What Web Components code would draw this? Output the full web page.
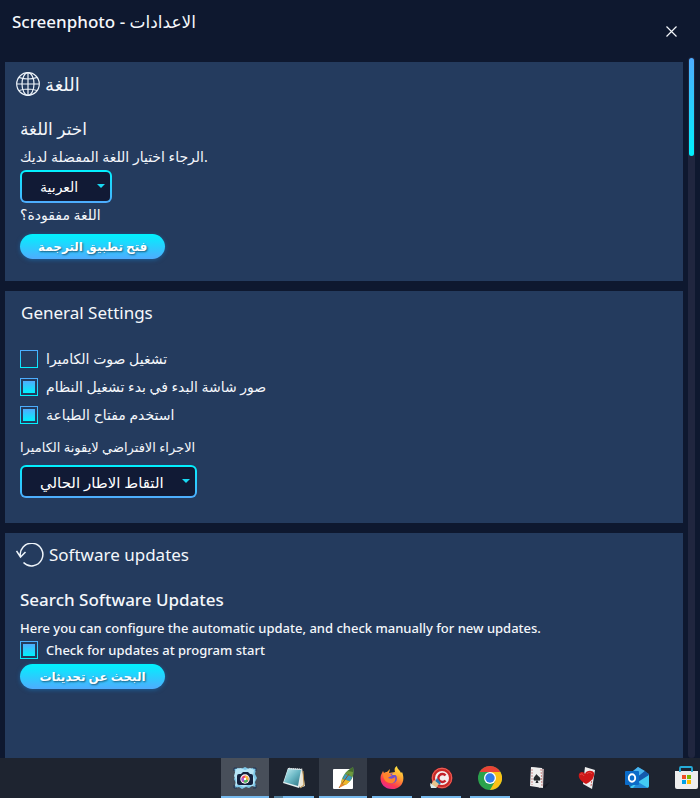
<!DOCTYPE html>
<html lang="en">
<head>
<meta charset="utf-8">
<title>Screenphoto</title>
<style>
html,body{height:100%}
body{margin:0;background:#0e182f;color:#f4f7fb;font-family:"Noto Sans","DejaVu Sans",sans-serif;font-size:14px;
--cyan:#00f2fe;--blue:#4facfe;--card:#243b5e;--ink:#111a35}
</style>
</head>
<body>
<settings-app></settings-app>
<script>
const define=(name,html,setup)=>{
  const t=document.createElement('template');
  t.innerHTML='<style>*{box-sizing:border-box}:host{display:block}</style>'+html;
  customElements.define(name,class extends HTMLElement{
    constructor(){
      super();
      this.attachShadow({mode:'open'}).append(t.content.cloneNode(true));
    }
    connectedCallback(){if(setup)setup(this,this.shadowRoot)}
  });
};

define('title-bar',`<style>
:host{display:flex;justify-content:space-between;align-items:flex-start;height:57px;padding:8px 16px 0 12px}
h1{margin:0;font-size:17px;font-weight:500;line-height:28px}
button{border:0;background:none;color:inherit;width:26px;height:26px;margin-top:10px;padding:0;display:grid;place-items:center}
svg{width:11px;height:11px}
</style>
<h1><slot></slot></h1>
<button aria-label="Close"><svg viewBox="0 0 11 11" fill="none" stroke="currentColor" stroke-width="1.2"><path d="M.5.5l10 10M10.5.5l-10 10"/></svg></button>`);

define('settings-card',`<style>
:host{background:var(--card);padding:8px 15px 22px}
header{display:flex;align-items:center;gap:5px;height:28px;margin-bottom:17px}
h2{margin:0;font-size:17px;font-weight:400;line-height:28px}
::slotted(svg){margin-left:-4px;flex:none}
::slotted(h3){margin:0 0 2px;font-size:17px;font-weight:500;line-height:28px}
::slotted(p){margin:0;line-height:24px}
</style>
<header><slot name="icon"></slot><h2><slot name="heading"></slot></h2></header>
<slot></slot>`);

define('drop-down',`<style>
:host{display:block;width:fit-content;position:relative}
select{appearance:none;display:block;height:33px;padding:0 31px 0 18px;border:2px solid transparent;border-radius:6px;
background:linear-gradient(var(--ink),var(--ink)) padding-box,linear-gradient(var(--cyan),var(--blue)) border-box;
color:#fff;font:inherit;direction:ltr}
i{position:absolute;right:7px;top:14px;border:4px solid transparent;border-top-color:#19d8f2;border-bottom:0;pointer-events:none}
</style><select><option></option></select><i></i>`,(h,r)=>{
  r.querySelector('option').textContent=h.getAttribute('value');
  r.querySelector('select').setAttribute('aria-label',h.getAttribute('label'));
});

define('check-box',`<style>
:host{height:28px}
:host([compact]){height:24px}
:host([compact]) label{height:20px}
label{display:flex;align-items:center;gap:8px;height:28px;line-height:24px;width:fit-content}
input{appearance:none;margin:0;width:18px;height:18px;flex:none;border:1px solid transparent;
background:linear-gradient(var(--card),var(--card)) padding-box,linear-gradient(var(--blue),var(--cyan)) border-box}
input:checked{background:linear-gradient(var(--blue),var(--cyan)) content-box,linear-gradient(var(--card),var(--card)) padding-box,linear-gradient(var(--blue),var(--cyan)) border-box;padding:2px}
</style><label><input type="checkbox"><span><slot></slot></span></label>`,(h,r)=>{
  r.querySelector('input').checked=h.hasAttribute('checked');
});

define('pill-button',`<style>
:host{width:fit-content}
button{display:block;border:0;border-radius:13px;min-width:145px;height:25px;padding:0 18px;font:inherit;font-size:12px;font-weight:700;line-height:24px;color:#fff;
background:linear-gradient(var(--cyan),var(--blue));box-shadow:0 1px 4px #1684d080;text-shadow:1px 1px 2px #0008}
</style><button><slot></slot></button>`);

define('scroll-track',`<style>
:host{width:7px;background:#20263f;border-radius:4px;padding:1px}
div{height:98px;border-radius:3px;background:linear-gradient(var(--blue),var(--cyan))}
</style><div></div>`);

define('task-item',`<style>
:host{flex:0 0 48px;height:40px;position:relative}
:host([active]){background:#484f5a}
:host([hover]){background:#343b47}
button{width:100%;height:100%;border:0;background:none;padding:0;display:grid;place-items:center}
:host([open])::after{content:"";position:absolute;bottom:0;left:4px;right:4px;height:2px;background:#76b9ed}
:host([grouped])::after{background:linear-gradient(90deg,#54819f 9px,#76b9ed 9px)}
:host([wide])::after{left:0;right:0}
</style><button><slot></slot></button>`,(h,r)=>r.querySelector('button').setAttribute('aria-label',h.getAttribute('label')));

define('task-bar',`<style>
:host{display:flex;gap:1px;height:40px;background:#1e2430;padding-left:221px;overflow:hidden}
</style>
<task-item label="Screenphoto" open wide active><svg width="24" height="24" viewBox="0 0 24 24"><path d="M1 3l4-1 3 1 4-2 4 2 4-1 3 1-1 5 2 4-2 4 1 5-4-1-3 2-3-1-4 2-3-2-4 1 1-5-2-4 2-4z" fill="#7cc6e8"/><path d="M3 3l5-1 4 2 5-2 4 2-1 5 2 5-2 6-5-1-4 2-5-2-4 1 1-6-2-4z" fill="#b5e4f5"/><path d="M1 5V2h3M20 2h3v3M23 19v3h-3M4 22H1v-3" fill="none" stroke="#213656" stroke-width="1"/><rect x="4" y="8" width="16" height="11" rx="2" fill="#14203c"/><path d="M8 8l2-2h5l2 2" fill="#14203c"/><circle cx="12" cy="13" r="4.700" fill="#fff"/><circle cx="12" cy="13" r="3.500" fill="#ed426b"/><path d="M12 13V9.500a3.500 3.500 0 0 1 3.200 5z" fill="#f6bd38"/><path d="M12 13l3.200 1.500a3.500 3.500 0 0 1-4.800 1.600z" fill="#45bd61"/><path d="M12 13l-1.600 3.100A3.500 3.500 0 0 1 8.800 11.500z" fill="#a45bd0"/><circle cx="12" cy="13" r="1.200" fill="#fff"/></svg></task-item>
<task-item label="Notepad" open grouped><svg width="24" height="24" viewBox="0 0 24 24"><defs><linearGradient id="n" x2="1" y2="1"><stop stop-color="#c4eef4"/><stop offset=".5" stop-color="#6ab7c4"/><stop offset="1" stop-color="#2d7383"/></linearGradient></defs><path d="M20 2l3 18-5 2-2-4z" fill="#ece6d6"/><path d="M21 5l1 14-4 3" fill="none" stroke="#b88b45"/><path d="M6 2l14 1-3 19-16-5z" fill="#e4eef0"/><path d="M6 3l13 1-3 16-14-4z" fill="url(#n)"/><path d="M7 2.500l13 1" stroke="#d5dde0" stroke-width="1.500" stroke-dasharray="1 1"/></svg></task-item>
<task-item label="Image editor" open wide hover><svg width="24" height="24" viewBox="0 0 24 24"><rect x="2" y="3" width="20" height="20" rx="1" fill="#fff"/><path d="M10 19c0-7 4-14 12-18 2 6 0 14-8 18z" fill="#5b8e48"/><path d="M11 13l8 2-4 4-5-1z" fill="#efb72b"/><path d="M14 8l7 3-2 4-7-2z" fill="#3c9ac1"/><path d="M14 8l5-4 3 2-1 4z" fill="#6f9a3e"/><path d="M17 5l5-4v5z" fill="#456d2d"/><path d="M8 22L18 8" stroke="#955724"/><path d="M8 22l2-5 4 2z" fill="#e4862d"/></svg></task-item>
<task-item label="Firefox" open><svg width="24" height="24" viewBox="0 0 24 24"><defs><linearGradient id="f" x1=".8" x2=".25" y2="1"><stop stop-color="#fff044"/><stop offset=".42" stop-color="#ff9831"/><stop offset=".75" stop-color="#ff3b4d"/><stop offset="1" stop-color="#e3269b"/></linearGradient></defs><path d="M3 5l1 2c1-1 2-1 3-1l3-3-1 4 6-1c-1-3 0-5 2-6 0 3 3 4 4 7l1-1c4 9-1 17-10 17C3 23-1 15 1 9z" fill="url(#f)"/><circle cx="12" cy="12.500" r="5" fill="#7150ce"/><path d="M3 8c4-2 7-1 9 2-2 0-3 1-4 2 3 1 5 1 7-1 1 5-2 7-5 6-4 0-7-4-7-9z" fill="#ff842c"/><path d="M12 9c1-3 5-3 6 1-1-1-2-1-3-1" fill="#ffb63a"/></svg></task-item>
<task-item label="CCleaner" open><svg width="24" height="24" viewBox="0 0 24 24"><circle cx="13" cy="12" r="10.500" fill="#c92825"/><circle cx="13" cy="12" r="9.700" fill="none" stroke="#e8655e"/><circle cx="13" cy="12" r="7" fill="#f5eeee"/><path d="M16.500 9.500a4 4 0 1 0 0 5" fill="none" stroke="#c3202a" stroke-width="2.400"/><path d="M8 12l4 5-2 2-4-3z" fill="#247bb5"/><path d="M5 14l5 4-3 4-6-2z" fill="#e7c58f"/><path d="M1 17l7 5H2z" fill="#d9ecee"/></svg></task-item>
<task-item label="Chrome" open><svg width="24" height="24" viewBox="0 0 24 24"><circle cx="12" cy="12" r="12" fill="#2ba24c"/><path d="M12 12L1.600 6A12 12 0 0 1 22.400 6z" fill="#e94335"/><path d="M12 6h10.400A12 12 0 0 1 12 24l5.200-9z" fill="#fbc116"/><path d="M1.600 6l5.200 9L12 6z" fill="#2ba24c"/><circle cx="12" cy="12" r="6" fill="#fff"/><circle cx="12" cy="12" r="4.700" fill="#327be8"/></svg></task-item>
<task-item label="Solitaire"><svg width="24" height="24" viewBox="0 0 24 24"><path d="M15 21l8-5-5 6z" fill="#0c1018" opacity=".5"/><path d="M5 1l12 2-1 18-4 1z" fill="#b9a3a5"/><path d="M4 1l11 1 1 20-13-2z" fill="#eee"/><path d="M5 3v16M14 3l1 17" stroke="#c98585" stroke-dasharray="2 1"/><path d="M9.500 8c-1 2-3 3-3 5 0 2 2 2 3 1l-1 3h3l-1-3c1 1 3 1 3-1s-3-3-4-5z" fill="#252a2e"/></svg></task-item>
<task-item label="Hearts"><svg width="24" height="24" viewBox="0 0 24 24"><path d="M9 1l10 3-3 19-9-5z" fill="#eee"/><path d="M17 6l-2 14" stroke="#cd6464" stroke-dasharray="2 1"/><path d="M10 18C4 15 2 11 3 8c2-3 5-2 6 0 1-4 8-4 9-1 1 5-4 9-8 11z" fill="#ce1717"/><path d="M4 9c1-2 3-1 4 1M11 8c1-2 4-2 5 0" fill="none" stroke="#e8504a"/></svg></task-item>
<task-item label="Outlook"><svg width="24" height="24" viewBox="0 0 24 24"><path d="M4 8l9-7 11 7v12l-2 2H6l-2-2z" fill="#1272be"/><path d="M7 6l6-5 7 4-10 8z" fill="#49b5ef"/><path d="M10 13L20 5l4 4-11 8z" fill="#145aac"/><path d="M5 21L24 9v11q0 2-2 2H6z" fill="#42ccf3"/><path d="M13 16l10 6H8z" fill="#238bd7"/><rect x="0" y="5" width="14" height="14" rx="1" fill="#0b6cc9"/><ellipse cx="7" cy="12" rx="3.200" ry="3.700" fill="none" stroke="#fff" stroke-width="1.900"/></svg></task-item>
<task-item label="Store"><svg width="24" height="24" viewBox="0 0 24 24"><path d="M6 6V2q0-1 1-1h10q1 0 1 1v4" fill="none" stroke="#25abd8" stroke-width="1.800"/><path d="M1 5h23v16q0 2-2 2H3q-2 0-2-2z" fill="#eee"/><path d="M6 6V4M18 6V4" stroke="#25abd8" stroke-width="1.800"/><path d="M8 9h4v4H8z" fill="#f04e24"/><path d="M13 9h4v4h-4z" fill="#7eb900"/><path d="M8 14h4v4H8z" fill="#00a2e8"/><path d="M13 14h4v4h-4z" fill="#ffb900"/></svg></task-item>`);

define('settings-app',`<style>
:host{display:flex;flex-direction:column;height:100vh;overflow:hidden}
main{flex:1;min-height:0;display:flex;gap:5px;padding:0 5px;overflow:hidden}
.cards{flex:1;display:flex;flex-direction:column;gap:10px;padding-top:5px;overflow:hidden}
settings-card{flex:none}
.general{padding-bottom:25px}
.last{flex:1 0 auto}
.after{margin-top:7px}
.choice{margin-top:1px}
.checks{margin-top:18px}
.field{margin-top:6px}
.small{font-size:13px}
.big{font-size:15px}
.head{font-size:18px}
.text{font-size:13px;font-weight:500}
.pad{display:block;padding-left:1px}
</style>
<title-bar>Screenphoto - <bdi>الاعدادات</bdi></title-bar>
<main>
<div class="cards">
<settings-card>
<svg slot="icon" width="24" height="24" viewBox="0 0 24 24" fill="none" stroke="#eef4fa" stroke-width="1.200"><circle cx="12" cy="12" r="11.300"/><ellipse cx="12" cy="12" rx="6" ry="11.300"/><path d="M12 1v22M1 12h22M3 5.500q9 3 18 0M3 18.500q9-3 18 0"/></svg>
<span slot="heading" class="head">اللغة</span>
<h3>اختر اللغة</h3>
<p>الرجاء اختيار اللغة المفضلة لديك.</p>
<drop-down class="choice" label="اختر اللغة" value="العربية"></drop-down>
<p>اللغة مفقودة؟</p>
<pill-button class="after">فتح تطبيق الترجمة</pill-button>
</settings-card>
<settings-card class="general">
<span slot="heading" class="pad">General Settings</span>
<check-box class="checks">تشغيل صوت الكاميرا</check-box>
<check-box checked>صور شاشة البدء في بدء تشغيل النظام</check-box>
<check-box checked>استخدم مفتاح الطباعة</check-box>
<p class="small field">الاجراء الافتراضي لايقونة الكاميرا</p>
<drop-down class="big field" label="الاجراء الافتراضي لايقونة الكاميرا" value="التقاط الاطار الحالي"></drop-down>
</settings-card>
<settings-card class="last">
<svg slot="icon" width="28" height="24" viewBox="0 0 28 24" fill="none" stroke="#eef4fa" stroke-width="1.500"><path d="M4.500 14A11.300 11.300 0 1 1 7.500 19.500M.5 8l4 6 5-5"/></svg>
<span slot="heading">Software updates</span>
<h3>Search Software Updates</h3>
<p class="text">Here you can configure the automatic update, and check manually for new updates.</p>
<check-box class="text" checked compact>Check for updates at program start</check-box>
<pill-button>البحث عن تحديثات</pill-button>
</settings-card>
</div>
<scroll-track></scroll-track>
</main>
<task-bar></task-bar>`);
</script>
</body>
</html>
